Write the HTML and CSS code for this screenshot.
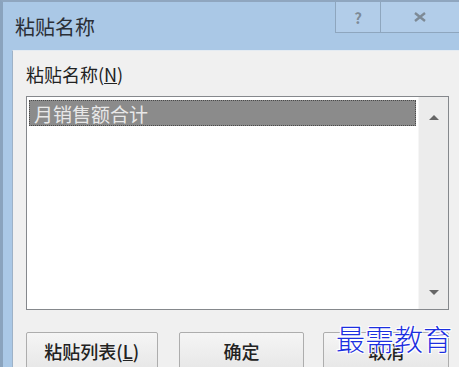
FILE: index.html
```html
<!DOCTYPE html>
<html lang="zh">
<head>
<meta charset="UTF-8">
<title>粘贴名称</title>
<link rel="stylesheet" href="styles.css">
</head>
<body>
    <div class="window">
        <!-- title bar -->
        <div class="titlebar">
            <span class="title">粘贴名称</span>
            <div class="controls">
                <span class="ctl help">?</span>
                <span class="ctl close">
                    <svg width="14" height="10" viewBox="0 0 14 10"><path d="M2 1 L12 9 M12 1 L2 9" stroke="#7d8a96" stroke-width="2.4"/></svg>
                </span>
            </div>
        </div>

        <!-- dialog body -->
        <div class="client">
            <div class="label">粘贴名称(<u>N</u>)</div>
            <div class="listbox">
                <div class="items">
                    <div class="item selected">月销售额合计</div>
                </div>
                <div class="scrollbar">
                    <span class="arrow up"></span>
                    <span class="arrow down"></span>
                </div>
            </div>
            <div class="buttons">
                <button class="btn">粘贴列表(<u>L</u>)</button>
                <button class="btn">确定</button>
                <button class="btn">取消</button>
            </div>
        </div>

        <div class="watermark">最需教育</div>
    </div>
</body>
</html>
```

FILE: styles.css
```css
body, html {
    margin: 0;
    height: 100%;
    overflow: hidden;
    font-family: "Noto Sans CJK SC", "Liberation Sans", sans-serif;
}
.window {
    position: relative;
    height: 100%;
    display: flex;
    flex-direction: column;
    background: #aac8e6;
    border-top: 2px solid #8fa6bf;
    border-left: 3px solid #8aa3bd;
    box-sizing: border-box;
}
.titlebar {
    height: 48px;
    display: flex;
    justify-content: space-between;
    align-items: flex-start;
    flex-shrink: 0;
}
.title {
    font-size: 20px;
    color: #2a2f36;
    margin: 12px 0 0 12px;
    line-height: 26px;
}
.controls {
    display: flex;
}
.ctl {
    height: 30px;
    display: flex;
    align-items: center;
    justify-content: center;
    border-bottom: 1px solid #8ea6be;
    border-left: 1px solid #8ea6be;
    background: #b2cde9;
}
.help {
    width: 44px;
    color: #7d8a96;
    font-weight: bold;
    font-size: 15px;
}
.close {
    width: 78px;
}
.client {
    flex: 1;
    margin-left: 9px;
    background: #f0f0f0;
    border-left: 1px solid #9eb2c7;
    border-top: 1px solid #e4ebf2;
    padding: 11px 10px 0 13px;
}
.label {
    font-size: 18px;
    line-height: 24px;
    color: #222;
}
.label u, .btn u {
    text-decoration: underline;
}
.listbox {
    margin-top: 10px;
    height: 212px;
    border: 1px solid #85888c;
    background: #fff;
    display: flex;
}
.items {
    flex: 1;
    padding: 3px 2px;
}
.item {
    height: 26px;
    line-height: 25px;
    font-size: 19px;
    padding-left: 4px;
    box-sizing: border-box;
}
.selected {
    background: #8b8b8b;
    color: #e8e8e8;
    border: 1px dotted #4a4a4a;
}
.scrollbar {
    width: 29px;
    background: #ececec;
    border-left: 1px solid #f6f6f6;
    display: flex;
    flex-direction: column;
    justify-content: space-between;
    align-items: center;
    padding: 18px 0 14px;
}
.arrow {
    width: 0;
    height: 0;
    border-left: 5px solid transparent;
    border-right: 5px solid transparent;
}
.up {
    border-bottom: 5px solid #666;
}
.down {
    border-top: 5px solid #666;
}
.buttons {
    margin-top: 22px;
    display: flex;
    gap: 19px;
}
.btn {
    width: 128px;
    height: 46px;
    background: linear-gradient(#f5f5f5, #e4e4e4);
    border: 1px solid #adadad;
    border-radius: 2px;
    font-family: "Noto Sans CJK SC", sans-serif;
    font-size: 18px;
    font-weight: 500;
    color: #222;
    padding: 0 0 8px;
}
.btn:first-child {
    width: 134px;
}
.btn:nth-child(2) {
    margin-left: 2px;
}
.watermark {
    position: absolute;
    left: 333px;
    top: 315px;
    font-family: "Noto Sans CJK SC", serif;
    font-weight: 300;
    font-size: 29px;
    letter-spacing: 0;
    color: #1c2fe0;
    text-shadow: 1px 1px 0 #fff, -1px -1px 0 #fff, 1px -1px 0 #fff, -1px 1px 0 #fff, 0 0 3px #fff;
}
```
